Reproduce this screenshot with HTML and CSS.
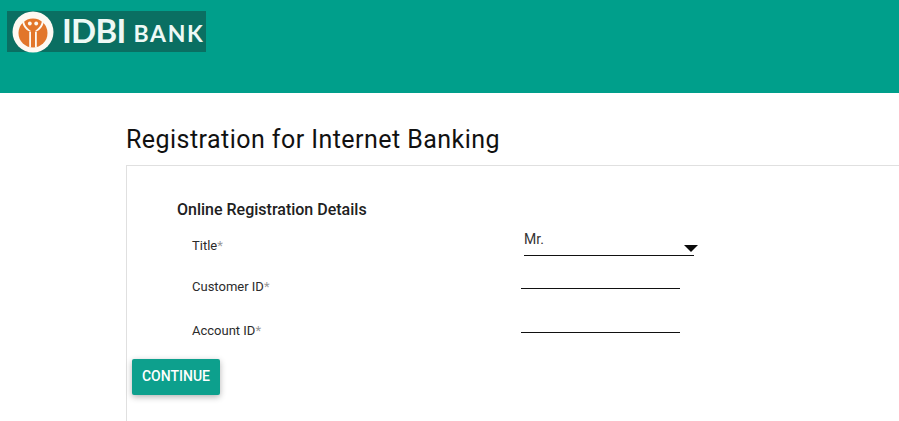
FILE: index.html
```html
<!DOCTYPE html>
<html lang="en">
<head>
    <meta charset="UTF-8">
    <meta name="viewport" content="width=device-width, initial-scale=1.0">
    <title>Registration for Internet Banking</title>
    <link rel="stylesheet" href="styles.css">
</head>
<body>
    <header class="top-bar">
        <div class="logo">
            <svg class="logo-mark" viewBox="0 0 42 42">
                <circle cx="21" cy="21" r="20.5" fill="#fdf9f2"/>
                <circle cx="21" cy="22" r="14.5" fill="#e2762a"/>
                <path d="M10 8 C10 14 13 19 18.5 21 L18.5 19.4 C14.5 17 12 13 11.8 8 Z" fill="#fdf9f2"/>
                <path d="M32 8 C32 14 29 19 23.5 21 L23.5 19.4 C27.5 17 30 13 30.2 8 Z" fill="#fdf9f2"/>
                <circle cx="17.8" cy="12.5" r="1.9" fill="#fdf9f2"/>
                <circle cx="24.2" cy="12.5" r="1.9" fill="#fdf9f2"/>
                <rect x="17.2" y="21" width="1.8" height="15.5" fill="#fdf9f2"/>
                <rect x="23" y="21" width="1.8" height="15.5" fill="#fdf9f2"/>
            </svg>
            <span class="logo-idbi">IDBI</span>
            <span class="logo-bank">BANK</span>
        </div>
    </header>

    <main class="content">
        <h1>Registration for Internet Banking</h1>

        <section class="panel">
            <h2>Online Registration Details</h2>

            <div class="form-row row-title">
                <label>Title<span class="req">*</span></label>
                <div class="select-field">
                    <span>Mr.</span>
                    <i class="arrow"></i>
                </div>
            </div>
            <div class="form-row row-customer">
                <label>Customer ID<span class="req">*</span></label>
                <div class="text-field"></div>
            </div>
            <div class="form-row row-account">
                <label>Account ID<span class="req">*</span></label>
                <div class="text-field"></div>
            </div>

            <button class="continue-btn">CONTINUE</button>
        </section>
    </main>
</body>
</html>
```

FILE: styles.css
```css
html, body {
    height: 421px;
    overflow: hidden;
}

body {
    margin: 0;
    font-family: Roboto, 'Liberation Sans', sans-serif;
    background-color: #fff;
    color: #212121;
}

.top-bar {
    height: 93px;
    padding: 11px 0 0 7px;
    box-sizing: border-box;
    background-color: #009f8b;
}

.logo {
    display: flex;
    align-items: center;
    width: 199px;
    height: 41px;
    box-sizing: border-box;
    padding-left: 5px;
    background-color: #0a6f62;
    color: #eef9f5;
    font-family: Lato, 'Liberation Sans', sans-serif;
    font-weight: 700;
}

.logo-mark {
    flex: none;
    width: 42px;
    height: 42px;
}

.logo-idbi {
    margin-left: 8px;
    padding-bottom: 2px;
    font-size: 33px;
    line-height: 39px;
    letter-spacing: -0.7px;
}

.logo-bank {
    margin-left: 8px;
    padding-top: 3px;
    font-size: 23px;
    line-height: 36px;
    letter-spacing: 1.6px;
}

.content {
    padding: 31px 0 0 126px;
}

h1 {
    margin: 0 0 9px;
    font-size: 25px;
    line-height: 32px;
    font-weight: 400;
    color: #111;
    letter-spacing: 0.45px;
}

.panel {
    height: 256px;
    padding: 35px 0 0 5px;
    box-sizing: border-box;
    border-top: 1px solid #e0e0e0;
    border-left: 1px solid #e0e0e0;
}

h2 {
    margin: 0 0 0 45px;
    font-size: 16px;
    line-height: 18px;
    font-weight: 500;
    color: #212121;
}

.form-row {
    display: flex;
    margin-left: 60px;
    font-size: 13px;
}

.form-row label {
    width: 329px;
    flex: none;
    padding-top: 10px;
    line-height: 16px;
    color: #2b2b2b;
}

.req {
    color: #999;
}

.row-title {
    margin-top: 9px;
    height: 33px;
}

.row-customer {
    margin-top: 8px;
    height: 36px;
}

.row-account {
    margin-top: 8px;
    height: 19px;
}

.select-field {
    position: relative;
    width: 170px;
    height: 28px;
    margin-left: 3px;
    box-sizing: border-box;
    border-bottom: 1px solid #111;
    font-size: 14px;
    line-height: 22px;
    color: #333;
}

.arrow {
    position: absolute;
    top: 17px;
    right: -4px;
    border-left: 7px solid transparent;
    border-right: 7px solid transparent;
    border-top: 7px solid #0a0a0a;
}

.text-field {
    width: 159px;
    height: 20px;
    box-sizing: border-box;
    border-bottom: 1px solid #111;
}

.continue-btn {
    display: block;
    margin-top: 27px;
    width: 88px;
    height: 36px;
    padding: 0 0 2px;
    border: none;
    border-radius: 2px;
    background-color: #0da08d;
    color: #fff;
    font-family: inherit;
    font-size: 14px;
    font-weight: 500;
    box-shadow: 0 2px 6px rgba(0, 0, 0, 0.3);
}
```
